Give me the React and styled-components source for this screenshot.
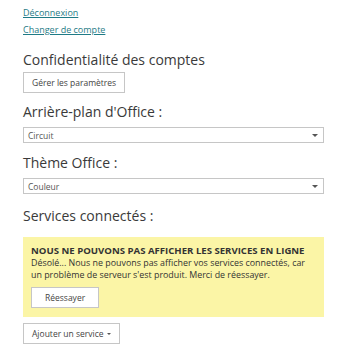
import React from 'react'
import styled, { createGlobalStyle } from 'styled-components'

const Global = createGlobalStyle`
  body {
    margin: 0;
    background: #fff;
    font-family: 'Open Sans', 'Noto Sans', sans-serif;
    color: #333;
  }
`

const Page = styled.div`
  width: 301px;
  padding: 6px 0 0 23px;
  display: flex;
  flex-direction: column;
  align-items: flex-start;
`

const Link = styled.a`
  font-size: 9px;
  line-height: 14px;
  color: #1f7b86;
  text-decoration: underline;
  margin-bottom: 3px;
`

const Heading = styled.h2`
  font-size: 14px;
  font-weight: 400;
  color: #3a3a3a;
  margin: ${({ $top }) => $top}px 0 ${({ $bottom }) => $bottom ?? 5}px;
  line-height: 20px;
`

const Button = styled.button`
  font-family: inherit;
  font-size: 8.5px;
  color: #444;
  background: #fff;
  border: 1px solid #c6c6c6;
  height: 21px;
  padding: 0 ${({ $pad }) => $pad ?? 8}px;
  display: flex;
  align-items: center;
  gap: 3px;
`

const Select = styled.div`
  width: 100%;
  box-sizing: border-box;
  height: 16px;
  flex-shrink: 0;
  border: 1px solid #c6c6c6;
  display: flex;
  align-items: center;
  justify-content: space-between;
  padding: 0 5px 0 4px;
  font-size: 8.5px;
  color: #555;
`

const Caret = styled.span`
  width: 0;
  height: 0;
  border-left: ${({ $s }) => $s}px solid transparent;
  border-right: ${({ $s }) => $s}px solid transparent;
  border-top: ${({ $s }) => $s}px solid #555;
`

const Alert = styled.div`
  width: 100%;
  box-sizing: border-box;
  margin-top: 6px;
  background: #fbf5a6;
  padding: 7px 8px 9px;
  display: flex;
  flex-direction: column;
  align-items: flex-start;
`

const AlertTitle = styled.div`
  font-size: 9.6px;
  font-weight: 700;
  color: #333;
  line-height: 13px;
  white-space: nowrap;
`

const AlertText = styled.p`
  font-size: 8.9px;
  line-height: 12px;
  color: #333;
  margin: 0 0 6px;
`

const Footer = styled.div`
  margin-top: 6px;
`

export default function App() {
  return (
    <>
      <Global />
      <Page>
        <Link href="#">Déconnexion</Link>
        <Link href="#">Changer de compte</Link>
        <Heading $top={10} $bottom={2}>Confidentialité des comptes</Heading>
        <Button>Gérer les paramètres</Button>
        <Heading $top={9}>Arrière-plan d'Office :</Heading>
        <Select>
          Circuit
          <Caret $s={3} />
        </Select>
        <Heading $top={10}>Thème Office :</Heading>
        <Select>
          Couleur
          <Caret $s={3} />
        </Select>
        <Heading $top={12}>Services connectés :</Heading>
        <Alert>
          <AlertTitle>NOUS NE POUVONS PAS AFFICHER LES SERVICES EN LIGNE</AlertTitle>
          <AlertText>
            Désolé... Nous ne pouvons pas afficher vos services connectés, car un problème de
            serveur s'est produit. Merci de réessayer.
          </AlertText>
          <Button $pad={13}>Réessayer</Button>
        </Alert>
        <Footer>
          <Button>
            Ajouter un service
            <Caret $s={2} />
          </Button>
        </Footer>
      </Page>
    </>
  )
}
